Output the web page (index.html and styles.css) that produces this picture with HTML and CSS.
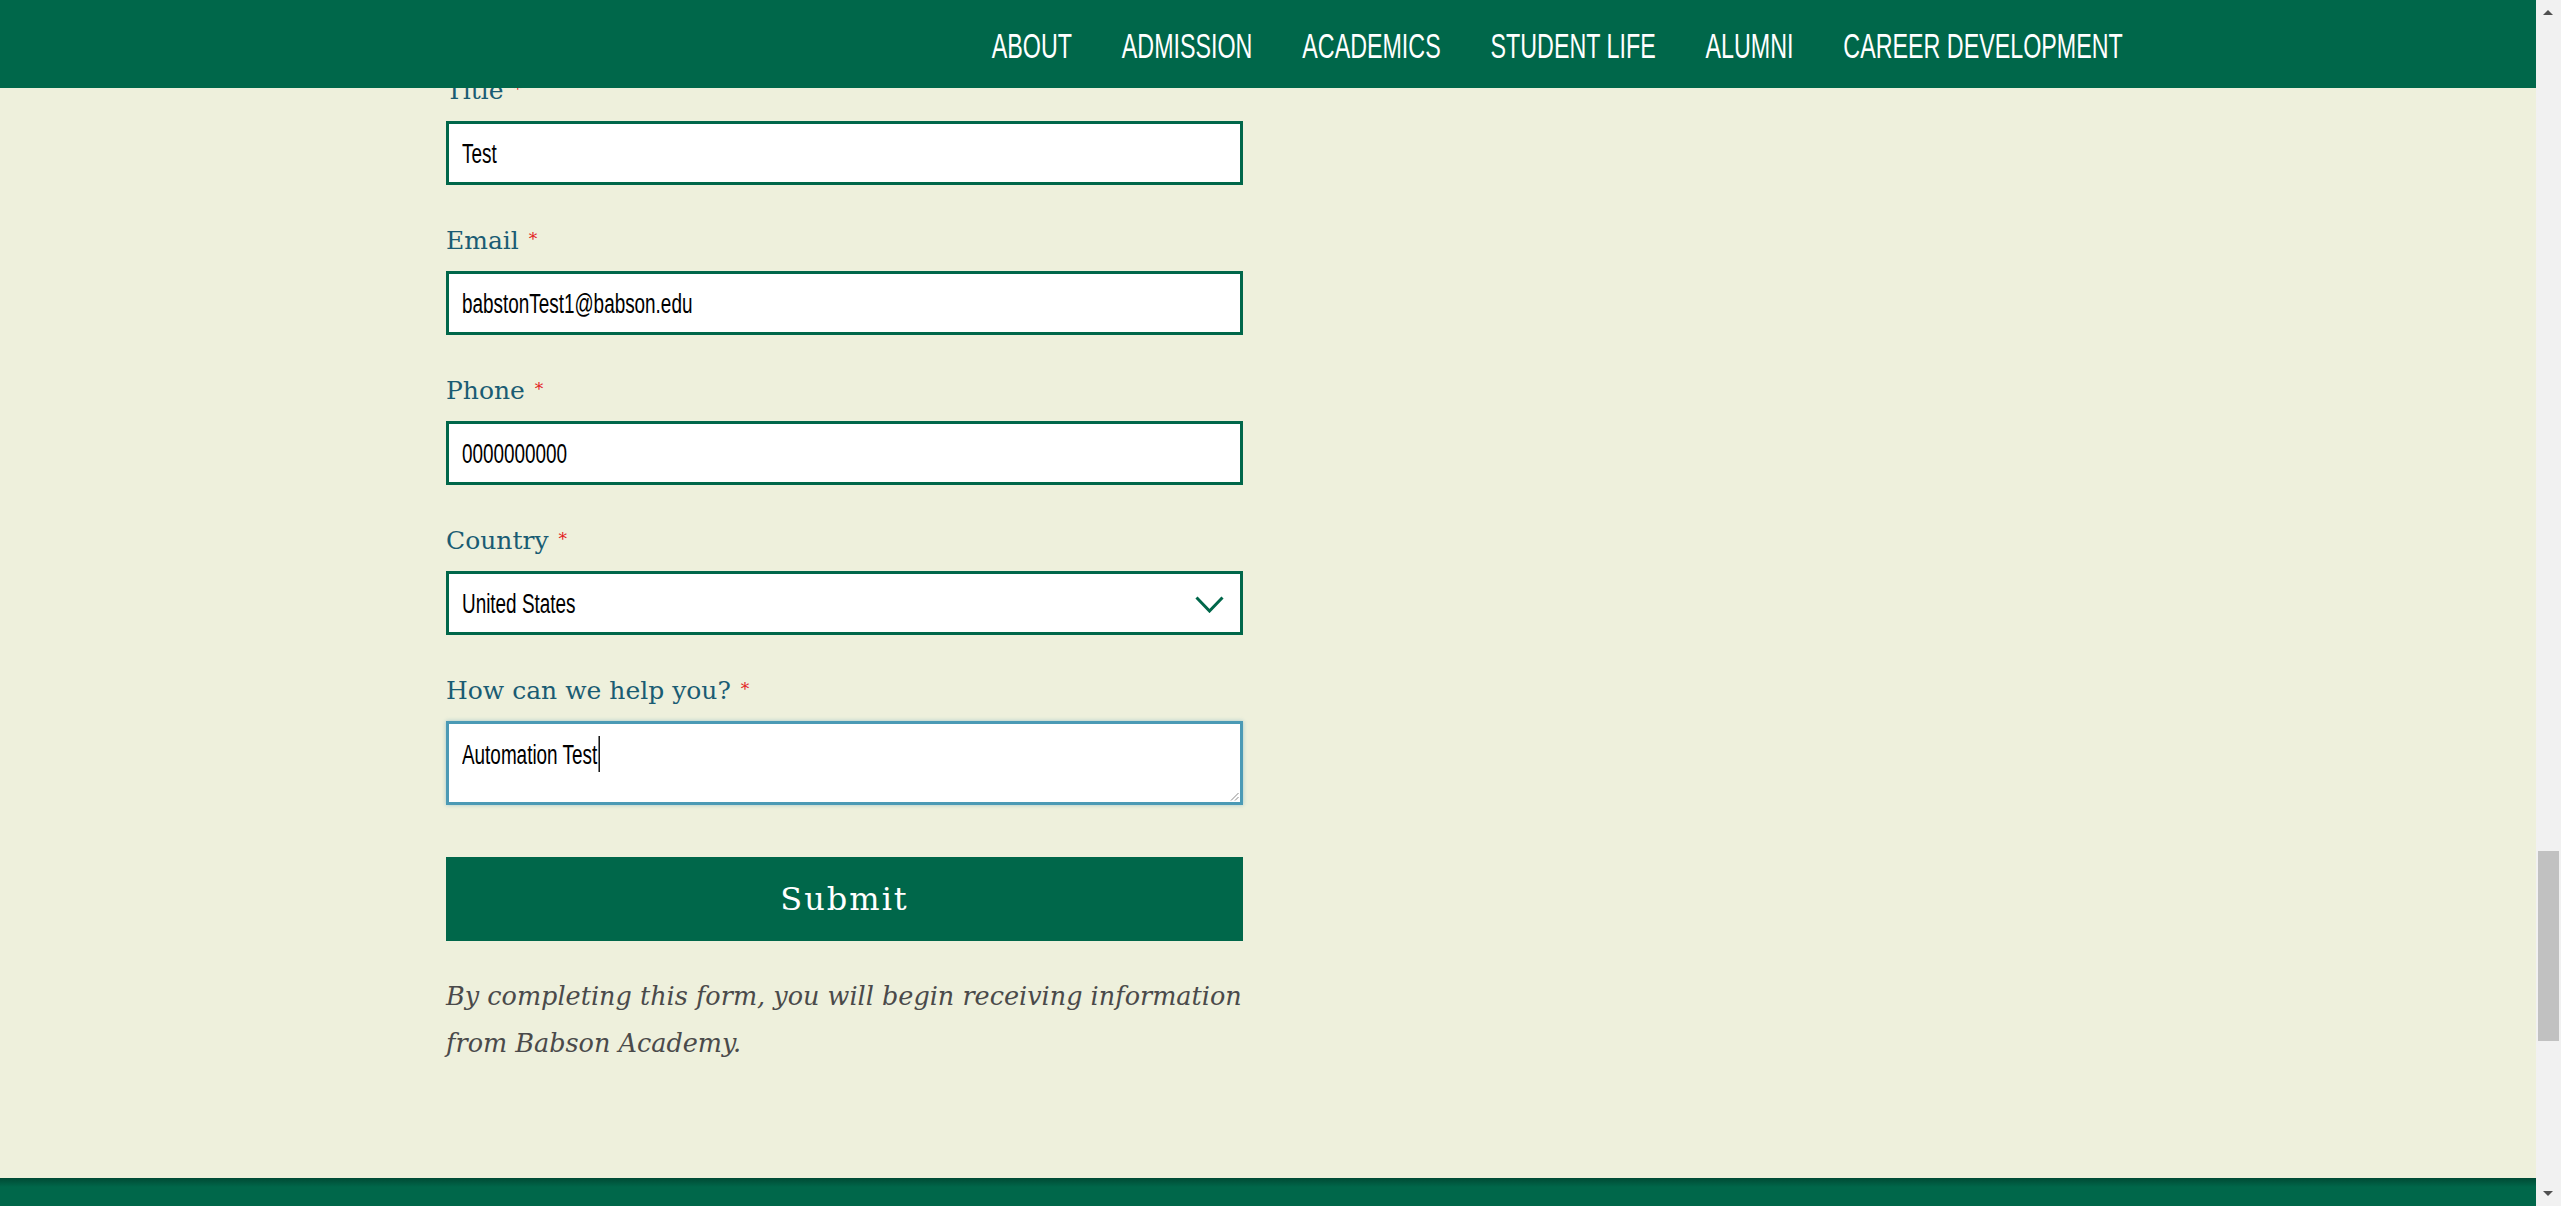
FILE: index.html
```html
<!DOCTYPE html>
<html lang="en">
<head>
<meta charset="utf-8">
<title>Babson Academy - Contact</title>
<link rel="stylesheet" href="styles.css">
</head>
<body>
<header class="site-header">
  <nav class="main-nav">
    <a class="nav-link" href="#">About</a>
    <a class="nav-link" href="#">Admission</a>
    <a class="nav-link" href="#">Academics</a>
    <a class="nav-link" href="#">Student Life</a>
    <a class="nav-link" href="#">Alumni</a>
    <a class="nav-link" href="#">Career Development</a>
  </nav>
</header>

<main class="content">
  <form class="form">
    <div class="field">
      <label class="label">Title <span class="req">*</span></label>
      <div class="input"><span class="value">Test</span></div>
    </div>
    <div class="field">
      <label class="label">Email <span class="req">*</span></label>
      <div class="input"><span class="value">babstonTest1@babson.edu</span></div>
    </div>
    <div class="field">
      <label class="label">Phone <span class="req">*</span></label>
      <div class="input"><span class="value">0000000000</span></div>
    </div>
    <div class="field">
      <label class="label">Country <span class="req">*</span></label>
      <div class="input select">
        <span class="value">United States</span>
        <svg class="chevron" width="29" height="17" viewBox="0 0 29 17"><path d="M1.5 1.5 L14.5 15 L27.5 1.5" fill="none" stroke="#00674a" stroke-width="3"/></svg>
      </div>
    </div>
    <div class="field field-last">
      <label class="label">How can we help you? <span class="req">*</span></label>
      <div class="textarea"><span class="value">Automation Test<span class="caret"></span></span>
        <svg class="grip" width="9" height="9" viewBox="0 0 9 9"><path d="M8.5 1 L1 8.5 M8.5 5 L5 8.5" stroke="#8a8a8a" stroke-width="1"/></svg>
      </div>
    </div>
    <button class="submit" type="button">Submit</button>
    <p class="disclaimer">By completing this form, you will begin receiving information from Babson Academy.</p>
  </form>
</main>

<footer class="site-footer"></footer>

<div class="scrollbar">
  <span class="arrow arrow-up"></span>
  <span class="thumb"></span>
  <span class="arrow arrow-down"></span>
</div>
</body>
</html>
```

FILE: styles.css
```css
html, body {
  margin: 0;
  padding: 0;
}
body {
  background: #eef0dc;
  height: 100vh;
  overflow: hidden;
  padding-right: 25px;
  box-sizing: border-box;
  font-family: "DejaVu Serif", "Liberation Serif", serif;
}

/* Header */
.site-header {
  position: fixed;
  top: 0;
  left: 0;
  right: 25px;
  height: 88px;
  background: #00674a;
  z-index: 10;
  display: flex;
  justify-content: flex-end;
  align-items: center;
  padding-right: 413px;
  padding-top: 2px;
  box-sizing: border-box;
}
.main-nav {
  display: flex;
  gap: 75px;
  align-items: center;
  transform: scaleX(0.665);
  transform-origin: right center;
}
.nav-link {
  color: #ffffff;
  text-decoration: none;
  text-transform: uppercase;
  font-family: "Liberation Sans", Arial, sans-serif;
  font-size: 35px;
  line-height: 1;
  white-space: nowrap;
}

/* Content */
.content {
  padding-top: 76px;
  padding-left: 446px;
}
.form {
  width: 797px;
  margin: 0;
}
.field {
  display: flex;
  flex-direction: column;
  gap: 15px;
  margin-bottom: 41px;
}
.field-last {
  margin-bottom: 52px;
}
.label {
  display: block;
  font-family: "DejaVu Serif", "Liberation Serif", serif;
  font-size: 25px;
  line-height: 30px;
  height: 30px;
  color: #1a5c73;
}
.req {
  color: #e31b23;
  font-size: 17px;
  line-height: 0;
  position: relative;
  top: -4px;
  margin-left: 2px;
}
.input {
  display: flex;
  align-items: center;
  width: 797px;
  height: 64px;
  box-sizing: border-box;
  border: 3px solid #00674a;
  background: #ffffff;
  padding: 3px 13px 0;
  font-family: "Liberation Sans", Arial, sans-serif;
  font-size: 27px;
  color: #000000;
}
.value {
  display: inline-block;
  line-height: 1;
  white-space: nowrap;
  transform: scaleX(0.7);
  transform-origin: left center;
}
.select {
  justify-content: space-between;
  padding-right: 16px;
}
.chevron {
  display: block;
  margin-top: -1px;
}
.textarea {
  position: relative;
  width: 797px;
  height: 84px;
  box-sizing: border-box;
  border: 3px solid #4b9ab5;
  box-shadow: 0 0 4px rgba(75, 154, 181, 0.45);
  background: #ffffff;
  padding: 12px 13px 0;
  font-family: "Liberation Sans", Arial, sans-serif;
  font-size: 27px;
  line-height: 28px;
  color: #000000;
}
.textarea .value {
  line-height: 28px;
}
.caret {
  display: inline-block;
  width: 1.4px;
  height: 36px;
  background: #000000;
  vertical-align: -8px;
  margin-left: 2px;
}
.grip {
  position: absolute;
  right: 1px;
  bottom: 1px;
}
.submit {
  display: block;
  width: 797px;
  height: 84px;
  border: 0;
  margin: 0;
  background: #00674a;
  color: #ffffff;
  font-family: "DejaVu Serif", "Liberation Serif", serif;
  font-size: 32px;
  letter-spacing: 2px;
  cursor: pointer;
  padding: 0;
}
.disclaimer {
  margin: 32px 0 0;
  font-family: "DejaVu Serif", "Liberation Serif", serif;
  font-style: italic;
  font-size: 25.5px;
  line-height: 47px;
  color: #4a4a4a;
}

/* Footer */
.site-footer {
  margin-top: 111px;
  height: 300px;
  background: linear-gradient(#004a34 0px, #00674a 9px);
}

/* Scrollbar */
.scrollbar {
  position: fixed;
  top: 0;
  right: 0;
  width: 25px;
  height: 100vh;
  background: #f1f1f1;
  z-index: 20;
}
.thumb {
  position: absolute;
  left: 2px;
  right: 2px;
  top: 851px;
  height: 190px;
  background: #c1c1c1;
}
.arrow {
  position: absolute;
  left: 7px;
  width: 0;
  height: 0;
  border-left: 5.5px solid transparent;
  border-right: 5.5px solid transparent;
}
.arrow-up {
  top: 10px;
  border-bottom: 5px solid #505050;
}
.arrow-down {
  bottom: 10px;
  border-top: 5px solid #505050;
}
```
